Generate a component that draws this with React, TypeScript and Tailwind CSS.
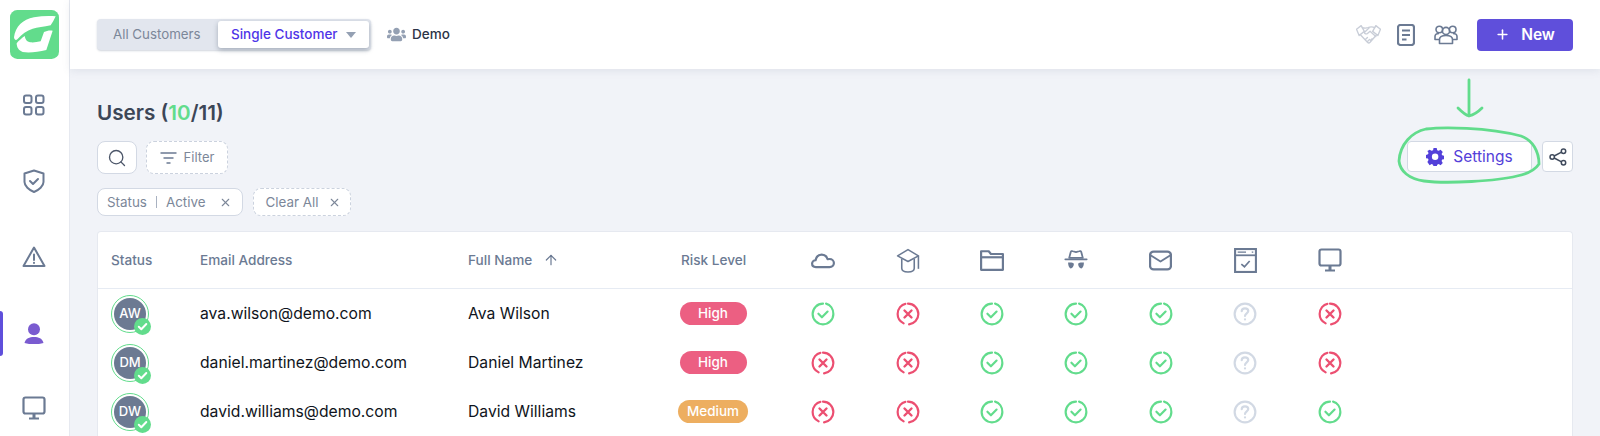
import { Plus, Search, X, ArrowUp } from 'lucide-react';
import { FaUsers } from 'react-icons/fa';

const ink = '#6b7a93';

function Logo() {
  return (
    <svg viewBox="28 30 147 147" className="w-[49px] h-[49px] block">
      <rect x="28" y="30" width="147" height="147" rx="22" fill="#62dc8c" />
      <path d="M40 112C44 80 66 58 100 52C122 48 145 47 165 49C160 60 155 68 150 76C130 80 110 82 96 86C78 92 64 102 50 118C46 122 41 120 40 112Z" fill="#fff" />
      <path d="M48 130C54 122 64 114 72 108C74 118 78 125 88 127C98 128 108 127 120 124L130 96C138 92 148 90 156 92L137 150C112 156 86 159 66 156C54 152 48 142 48 130Z" fill="#fff" />
    </svg>
  );
}

function GridIcon() {
  return (
    <svg width="24" height="24" viewBox="0 0 24 24" fill="none" stroke={ink} strokeWidth="2">
      <rect x="2" y="2.500" width="7.500" height="7.500" rx="2" />
      <rect x="14" y="2.500" width="7.500" height="7.500" rx="2" />
      <rect x="2" y="14" width="7.500" height="7.500" rx="2" />
      <rect x="14" y="14" width="7.500" height="7.500" rx="2" />
    </svg>
  );
}

function ShieldIcon() {
  return (
    <svg width="24" height="24" viewBox="0 0 24 24" fill="none" stroke={ink} strokeWidth="2" strokeLinejoin="round" strokeLinecap="round">
      <path d="M12 1.500L21.500 4.500V13C21.500 17 17 21 12 23C7 21 2.500 17 2.500 13V4.500Z" />
      <path d="M8 12l3 3 5-5" />
    </svg>
  );
}

function AlertIcon() {
  return (
    <svg width="24" height="24" viewBox="0 0 24 24" fill="none" stroke={ink} strokeWidth="2" strokeLinejoin="round" strokeLinecap="round">
      <path d="M12 2.500L22.500 21H1.500Z" />
      <path d="M12 9.500v5.500M12 17.800v.2" />
    </svg>
  );
}

function PersonIcon() {
  return (
    <svg width="20" height="22" viewBox="0 0 20 22" fill="#7a5bd0">
      <circle cx="10" cy="6.200" r="6" />
      <path d="M0.500 20C1.500 15.500 5.500 14 10 14s8.500 1.500 9.500 6c-3 1-6 1-9.500 1s-6.500 0-9.500-1Z" />
    </svg>
  );
}

function MonitorIcon({ size = 24 }: { size?: number }) {
  return (
    <svg width={size} height={size} viewBox="0 0 24 24" fill="none" stroke={ink} strokeWidth="2.200" strokeLinejoin="round">
      <rect x="1.500" y="1.500" width="21" height="16" rx="2" />
      <path d="M12 18v4" strokeWidth="3" />
      <path d="M7 22.500h10" strokeWidth="2" />
    </svg>
  );
}

function CloudIcon() {
  return (
    <svg width="24" height="24" viewBox="0 0 22 22" fill="none" stroke={ink} strokeWidth="2" strokeLinejoin="round">
      <path d="M4.500 17.500C2.500 17.500 1 16.200 1 14.300C1 12.500 2.500 11.200 4.200 11.200C4.800 8 7 6 9.800 6C12.500 6 14.500 7.700 15.200 10.300C15.800 10.100 16.300 10.100 17 10.100C19.300 10.100 21 11.700 21 13.800C21 16 19.300 17.500 17 17.500Z" />
    </svg>
  );
}

function CapIcon() {
  return (
    <svg width="24" height="25" viewBox="0 0 22 24" fill="none" stroke={ink} strokeWidth="1.500" strokeLinejoin="round">
      <path d="M1 7.500L11 1.500L21 7.500L11 13Z" />
      <path d="M5 10.500V19.500C5 22 8 23 11 23C14 23 17 22 17 19.500V10.500" />
      <path d="M21 7.500V20" />
    </svg>
  );
}

function FolderIcon() {
  return (
    <svg width="24" height="24" viewBox="0 0 22 22" fill="none" stroke={ink} strokeWidth="2" strokeLinejoin="round">
      <path d="M1 3h7l2 2.500h11V20H1Z" />
      <path d="M1 8.500h20" />
    </svg>
  );
}

function SpyIcon() {
  return (
    <svg width="24" height="21" viewBox="0 0 22 20" fill={ink}>
      <path d="M4.500 7.500L6 2C6.300 1 7 .8 8 1.200L11 2L14 1.200C15 .8 15.700 1 16 2L17.500 7.500Z" fill="none" stroke={ink} strokeWidth="1.700" strokeLinejoin="round" />
      <rect x="0" y="8" width="22" height="1.700" rx=".8" />
      <path d="M3.500 12C5.500 11.500 8.500 12 9 13C9 15.500 7.500 17.500 6 17.500C4.500 17.500 3.500 15 3.500 12Z" />
      <path d="M18.500 12C16.500 11.500 13.500 12 13 13C13 15.500 14.500 17.500 16 17.500C17.500 17.500 18.500 15 18.500 12Z" />
    </svg>
  );
}

function MailIcon() {
  return (
    <svg width="23" height="21" viewBox="0 0 22 20" fill="none" stroke={ink} strokeWidth="2.200" strokeLinejoin="round">
      <rect x="1" y="1.500" width="20" height="17" rx="3.500" />
      <path d="M1.500 5L11 11L20.500 5" strokeWidth="1.800" />
    </svg>
  );
}

function WindowCheckIcon() {
  return (
    <svg width="23" height="25" viewBox="0 0 22 24" fill="none" stroke={ink} strokeWidth="2">
      <rect x="1" y="1" width="20" height="22" />
      <path d="M1 7h20" strokeWidth="1.700" />
      <path d="M3.500 4h8M17 4h1.500" strokeWidth="1.200" />
      <path d="M7 15.500l3 2.500 5-5.500" strokeWidth="1.600" />
    </svg>
  );
}

function CheckMark() {
  return (
    <svg width="24" height="24" viewBox="0 0 22 22" fill="none" stroke="#62dc8c" strokeWidth="2" strokeLinecap="round" strokeLinejoin="round">
      <path d="M13.800 1.500C17.800 2.600 20.500 6.400 20.500 11C20.500 16.300 16.300 20.500 11 20.500C5.700 20.500 1.500 16.300 1.500 11C1.500 5.700 5.700 1.500 11 1.500" />
      <path d="M6.800 10.800l3.200 3.200 5.200-5.200" />
    </svg>
  );
}

function CrossMark() {
  return (
    <svg width="24" height="24" viewBox="0 0 22 22" fill="none" stroke="#ec4f71" strokeWidth="2" strokeLinecap="round">
      <path d="M11 1.500C16.300 1.500 20.500 5.700 20.500 11C20.500 16 16.600 20 12 20.500" />
      <path d="M7 19.600C3.800 18 1.500 14.800 1.500 11C1.500 6 5 2.200 8.600 1.700" />
      <path d="M7.800 7.800l6.400 6.400M14.200 7.800l-6.400 6.400" strokeWidth="2.200" />
    </svg>
  );
}

function UnknownMark() {
  return (
    <svg width="24" height="24" viewBox="0 0 22 22" fill="none" stroke="#d2d9e4" strokeWidth="2" strokeLinecap="round">
      <circle cx="11" cy="11" r="9.500" />
      <path d="M8 8.500C8 6.700 9.300 5.800 11 5.800C12.700 5.800 14 6.800 14 8.300C14 10.300 11 10.500 11 12.800" />
      <path d="M11 15.800v.2" />
    </svg>
  );
}

function HandshakeIcon() {
  return (
    <svg width="25" height="21" viewBox="0 0 24 20" fill="none" stroke="#c9ced8" strokeWidth="1.300" strokeLinejoin="round" strokeLinecap="round">
      <path d="M.5 5L5 1.500L8 7L3 11Z" />
      <path d="M23.500 5L19 1.500L16 7L21 11Z" />
      <path d="M6 3.500C8 4 10 4 11.500 3.500C13.500 2.500 16 2.500 18 3.500" />
      <path d="M4 10L11 17.500C12 18.500 13 18 13.500 17.500L20 10" />
      <path d="M12.500 3.800L8 8C8.500 9.500 10 9.800 11 9L13.500 6.800L19 12" />
      <path d="M9 14.800L11 12.800M11 16.800L13 14.800M14 15.500L15.500 14" />
    </svg>
  );
}

function HeaderUsers() {
  return (
    <svg width="24" height="22" viewBox="0 0 24 22" fill="none" stroke={ink} strokeWidth="1.600" strokeLinejoin="round">
      <circle cx="12" cy="7" r="3.600" />
      <circle cx="5.300" cy="5.500" r="3.300" />
      <circle cx="18.700" cy="5.500" r="3.300" />
      <path d="M5.500 19.500V15.500C5.500 13 8 11.500 12 11.500C16 11.500 18.500 13 18.500 15.500V19.500Z" />
      <path d="M5.500 15.500H1V12.500C1 10.500 3 9.500 5 9.500M18.500 15.500H23V12.500C23 10.500 21 9.500 19 9.500" />
    </svg>
  );
}

function DocIcon() {
  return (
    <svg width="18" height="22" viewBox="0 0 18 22" fill="none" stroke={ink} strokeWidth="2.200" strokeLinejoin="round">
      <rect x="1" y="1" width="16" height="20" rx="2.500" />
      <path d="M5 6.500h8M5 11h8M5 15.500h4.500" strokeWidth="1.800" />
    </svg>
  );
}

function FilterLines() {
  return (
    <svg width="17" height="12" viewBox="0 0 16 12" fill="none" stroke={ink} strokeWidth="1.500">
      <path d="M0 1h16M3 6h10M6 11h4" />
    </svg>
  );
}

function GearIcon() {
  return (
    <svg width="18" height="18" viewBox="0 0 18 18" fill="#5340d9">
      <path fillRule="evenodd" d="M7.400 0h3.200l.5 2.300 1.500.7 2-1.200 2.200 2.300-1.200 2 .6 1.500 2.300.6v3.200l-2.300.5-.6 1.500 1.200 2-2.200 2.300-2-1.200-1.500.6-.5 2.300H7.400l-.5-2.300-1.500-.6-2 1.200L1.100 14.400l1.200-2-.6-1.500L-.6 10.400V7.200l2.300-.6.600-1.500-1.200-2L3.400 1.800l2 1.200 1.500-.7ZM9 5.700a3.300 3.300 0 1 0 0 6.600 3.300 3.300 0 0 0 0-6.600Z" transform="translate(.3 -.1) scale(.98)" />
    </svg>
  );
}

function ShareIcon() {
  return (
    <svg width="18" height="18" viewBox="0 0 18 18" fill="none" stroke="#3f4a5c" strokeWidth="1.500">
      <circle cx="14.500" cy="3.200" r="2.200" />
      <circle cx="3.200" cy="9" r="2.200" />
      <circle cx="14.500" cy="14.800" r="2.200" />
      <path d="M5.200 8l7.300-3.800M5.200 10l7.300 3.800" />
    </svg>
  );
}

function Avatar({ initials }: { initials: string }) {
  return (
    <div className="relative w-[38px] h-[38px] rounded-full border-[1.5px] border-[#62dc8c] flex items-center justify-center">
      <div className="w-[32px] h-[32px] rounded-full bg-[#6c7a92] flex items-center justify-center text-white text-[13px] font-medium">
        {initials}
      </div>
      <div className="absolute right-[-3px] bottom-[-3px] w-[17px] h-[17px] rounded-full bg-[#62dc8c] flex items-center justify-center">
        <svg width="11" height="11" viewBox="0 0 11 11" fill="none" stroke="#fff" strokeWidth="2" strokeLinecap="round" strokeLinejoin="round">
          <path d="M1.800 5.800l2.500 2.400 5-5.200" />
        </svg>
      </div>
    </div>
  );
}

const headIcons = [CloudIcon, CapIcon, FolderIcon, SpyIcon, MailIcon, WindowCheckIcon, () => <MonitorIcon size={24} />];

const rows = [
  { initials: 'AW', email: 'ava.wilson@demo.com', name: 'Ava Wilson', risk: 'High', marks: 'cxcccqx' },
  { initials: 'DM', email: 'daniel.martinez@demo.com', name: 'Daniel Martinez', risk: 'High', marks: 'xxcccqx' },
  { initials: 'DW', email: 'david.williams@demo.com', name: 'David Williams', risk: 'Medium', marks: 'xxcccqc' },
];

export default function App() {
  return (
    <div className="flex h-[436px] w-[1600px] overflow-hidden bg-[#f1f3f8] text-[#0f1420] [font-family:Inter,sans-serif]">
      <aside className="w-[70px] shrink-0 bg-white border-r border-[#e6e9f0] flex flex-col items-center">
        <div className="mt-[10px] mb-[34px]"><Logo /></div>
        <div className="h-[24px] flex items-center pr-[1px]"><GridIcon /></div>
        <div className="mt-[52px] h-[24px] flex items-center pr-[1px]"><ShieldIcon /></div>
        <div className="mt-[52px] h-[24px] flex items-center pr-[1px]"><AlertIcon /></div>
        <div className="relative w-full mt-[42px] h-[45px] flex items-center justify-center pr-[1px]">
          <div className="absolute left-0 top-0 h-[45px] w-[3px] rounded-r bg-[#5f4fdb]" />
          <PersonIcon />
        </div>
        <div className="mt-[40px] h-[24px] flex items-center pr-[1px]"><MonitorIcon /></div>
      </aside>

      <main className="flex-1 min-w-0">
        <header className="h-[69px] bg-white shadow-[0_2px_8px_rgba(100,116,139,0.12)] px-[27px] flex items-center justify-between">
          <div className="flex items-center">
            <div className="w-[274px] h-[31px] rounded bg-[#e2e6ee] flex items-center justify-between pl-[16px] pr-[2px] shadow-[0_1px_2px_rgba(100,116,139,0.3)]">
              <span className="text-[13.3px] text-[#7c8799]">All Customers</span>
              <div className="w-[151px] h-[27px] rounded-[3px] bg-white shadow-[0_2px_5px_rgba(71,85,105,0.4)] flex items-center pl-[13px] gap-[8px]">
                <span className="text-[13.5px] font-medium text-[#4f35e8]">Single Customer</span>
                <span className="w-0 h-0 border-x-[5.5px] border-x-transparent border-t-[6px] border-t-[#94a0b3]" />
              </div>
            </div>
            <FaUsers className="ml-[16px] text-[#94a0b3]" size={19} />
            <span className="ml-[6px] text-[13.5px] font-medium text-[#2b3447]">Demo</span>
          </div>
          <div className="flex items-center">
            <HandshakeIcon />
            <div className="ml-[16px]"><DocIcon /></div>
            <div className="ml-[19px]"><HeaderUsers /></div>
            <button className="ml-[19px] w-[96px] h-[32px] rounded bg-[#5f4fdb] text-white flex items-center justify-center gap-[11px] text-[15.5px] font-semibold">
              <Plus size={15} strokeWidth={2.500} />
              New
            </button>
          </div>
        </header>

        <div className="px-[27px]">
          <h1 className="mt-[30px] h-[28px] leading-[28px] text-[20.7px] font-semibold text-[#3c4657]">
            Users (<span className="text-[#62dc8c]">10</span>/11)
          </h1>

          <div className="mt-[14px] flex items-start justify-between">
            <div className="flex gap-[9px]">
              <button className="w-[40px] h-[33px] rounded-lg bg-white border border-[#d3d9e4] flex items-center justify-center">
                <Search size={20} strokeWidth={1.600} className="text-[#4c5669]" />
              </button>
              <button className="w-[82px] h-[33px] rounded-lg border border-dashed border-[#cbd2de] bg-white flex items-center justify-center gap-[7px] text-[13px] text-[#7c8799]">
                <FilterLines />
                Filter
              </button>
            </div>
            <div className="flex gap-[10px]">
              <button className="relative w-[125px] h-[31px] rounded bg-white border border-[#d3d9e4] flex items-center justify-center gap-[9px] text-[15.5px] text-[#5340d9]">
                <GearIcon />
                Settings
                <svg className="absolute left-[-11px] top-[-16px] overflow-visible pointer-events-none" width="146" height="60" viewBox="0 0 146 60" fill="none" stroke="#62dc8c" strokeWidth="2.800" strokeLinecap="round">
                  <path d="M2 35C3 18 15 6 29 3C45 1 90 1 124 10C136 14 142 26 142 38C138 44 130 48 120 50C100 55 50 58 27 55C12 53 3 45 2 35Z" />
                  <path d="M72 -46V-10M61 -18C65 -14 68 -11 72 -10C76 -11 81 -14 85 -18" />
                </svg>
              </button>
              <button className="w-[31px] h-[31px] rounded bg-white border border-[#d3d9e4] flex items-center justify-center">
                <ShareIcon />
              </button>
            </div>
          </div>

          <div className="mt-[14px] flex gap-[10px]">
            <div className="w-[146px] h-[28px] rounded-lg bg-white border border-[#d3d9e4] flex items-center pl-[9px] pr-[10px] text-[13.4px] text-[#7c8799]">
              <span>Status</span>
              <span className="mx-[9px] h-[12px] w-px bg-[#a9b2c1]" />
              <span>Active</span>
              <X size={13} className="ml-auto text-[#7c8799]" />
            </div>
            <div className="w-[98px] h-[28px] rounded-lg border border-dashed border-[#cbd2de] bg-white flex items-center justify-center gap-[9px] pl-[2px] text-[13.4px] text-[#7c8799]">
              Clear All
              <X size={13} />
            </div>
          </div>

          <div className="mt-[15px] bg-white rounded-t border border-b-0 border-[#e6e9f0]">
            <div className="h-[57px] flex items-center border-b border-[#e6ebf3] text-[13.6px] font-medium text-[#6b7a93]">
              <div className="w-[102px] pl-[13px]">Status</div>
              <div className="w-[268px]">Email Address</div>
              <div className="w-[189px] flex items-center gap-[11px]">
                Full Name
                <ArrowUp size={16} strokeWidth={1.800} />
              </div>
              <div className="w-[124px] pl-[24px]">Risk Level</div>
              {headIcons.map((Icon, i) => (
                <div key={i} className="w-[84.4px] flex justify-center"><Icon /></div>
              ))}
            </div>
            {rows.map((row) => (
              <div key={row.email} className="h-[49px] flex items-center text-[15.7px] text-[#0f1420]">
                <div className="w-[102px] pl-[13px]"><Avatar initials={row.initials} /></div>
                <div className="w-[268px]">{row.email}</div>
                <div className="w-[189px]">{row.name}</div>
                <div className="w-[124px] pr-[12px] flex justify-center">
                  <span className={row.risk === 'High' ? 'w-[67px] h-[23px] rounded-full bg-[#ec5f82] text-white text-[13.5px] font-medium flex items-center justify-center' : 'w-[70px] h-[23px] rounded-full bg-[#edae60] text-white text-[13.5px] font-medium flex items-center justify-center'}>
                    {row.risk}
                  </span>
                </div>
                {row.marks.split('').map((m, i) => (
                  <div key={i} className="w-[84.4px] flex justify-center">
                    {m === 'c' && <CheckMark />}
                    {m === 'x' && <CrossMark />}
                    {m === 'q' && <UnknownMark />}
                  </div>
                ))}
              </div>
            ))}
          </div>
        </div>
      </main>
    </div>
  );
}
